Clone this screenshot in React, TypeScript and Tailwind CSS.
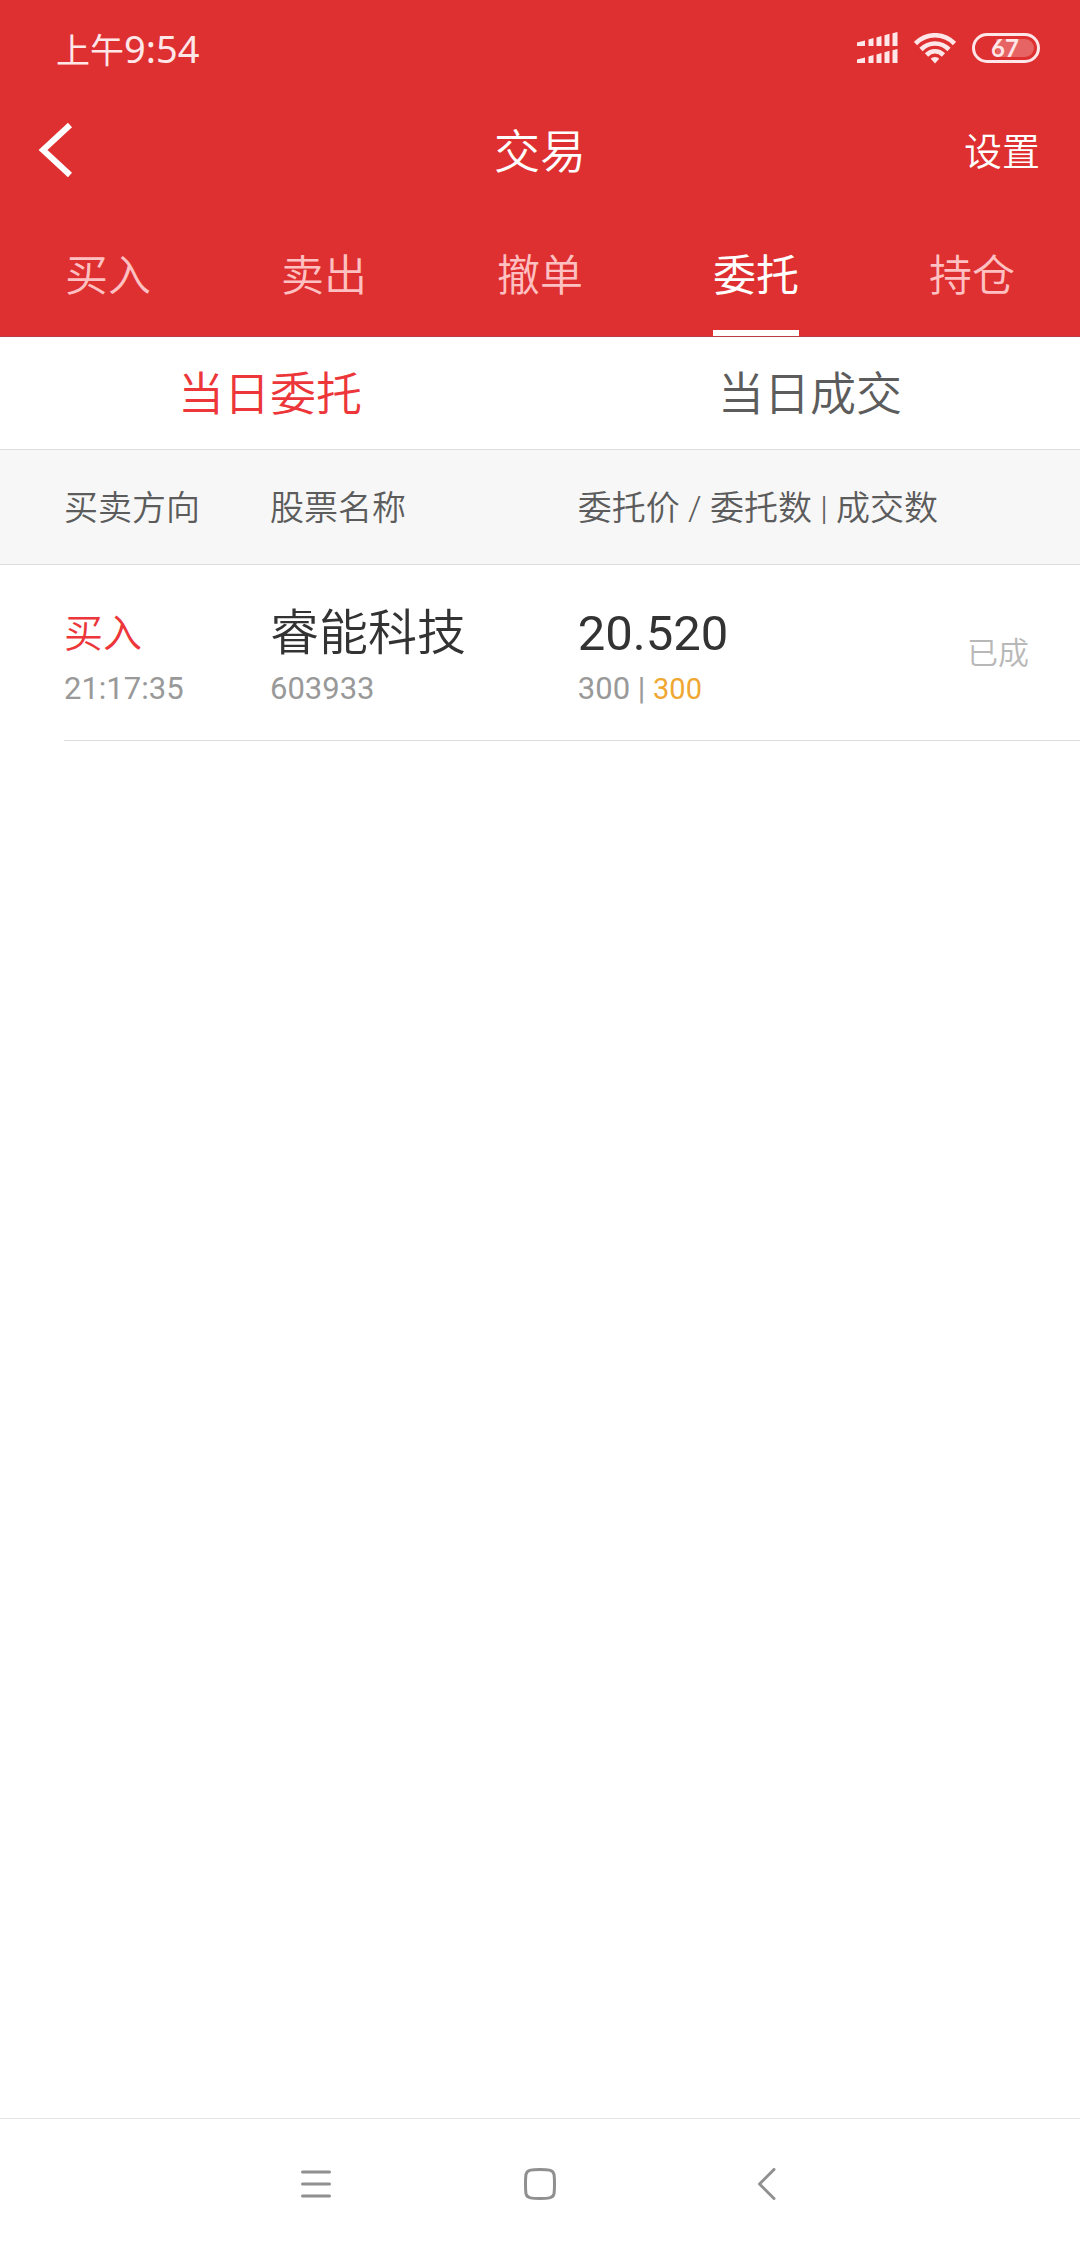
import React, { useState } from 'react';

interface Order {
  side: string;
  time: string;
  name: string;
  code: string;
  price: string;
  quantity: number;
  filled: number;
  status: string;
}

const TABS = ['买入', '卖出', '撤单', '委托', '持仓'];
const SUB_TABS = ['当日委托', '当日成交'];

const ORDERS: Order[] = [
  {
    side: '买入',
    time: '21:17:35',
    name: '睿能科技',
    code: '603933',
    price: '20.520',
    quantity: 300,
    filled: 300,
    status: '已成',
  },
];

const SignalIcon: React.FC = () => (
  <svg width="41" height="32" viewBox="0 0 41 32" fill="currentColor" aria-hidden="true">
    <path d="M0 10.5L8 8.5V14H0zM11.5 7.5l5-1.5v8h-5zM19.5 5.5l5-1.5v10h-5zM27.5 3.2l5-1.5V14h-5zM35.5 1.2l5-1.2v14h-5z" />
    <path d="M0 27.5l8-2V31H0zM11.5 24.5l5-1.5v8h-5zM19.5 22.5l5-1.5v10h-5zM27.5 20.2l5-1.5V31h-5zM35.5 18.2l5-1.2v14h-5z" />
  </svg>
);

const WifiIcon: React.FC = () => (
  <svg width="42" height="31" viewBox="0 0 42 31" fill="none" stroke="currentColor" strokeWidth="4.6" aria-hidden="true">
    <path d="M1.5 10.5C12.500 -0.500 29.500 -0.500 40.500 10.500" />
    <path d="M7 16.500C15 8.500 27 8.500 35 16.500" />
    <path d="M12.500 22C17.500 17 24.500 17 29.500 22" />
    <path d="M21 24c1.700 0 3.200.7 4.200 1.800L21 30.500l-4.200-4.700C17.800 24.700 19.300 24 21 24z" fill="currentColor" stroke="none" />
  </svg>
);

const Battery: React.FC<{ level: number }> = ({ level }) => (
  <div className="relative flex h-[30px] w-[68px] items-center justify-center rounded-full border-3 border-current">
    <div className="absolute inset-[3px] flex justify-end">
      <div className="rounded-r-full bg-white/25" style={{ width: `${level}%` }} />
    </div>
    <span className="relative pr-[2px] font-[Lato,sans-serif] text-[24px] leading-[24px] font-bold">{level}</span>
  </div>
);

const StatusBar: React.FC = () => (
  <div className="flex h-24 items-center justify-between pr-10 pl-14 text-[#ffe6e8]">
    <div className="flex items-baseline font-['Noto_Sans','Noto_Sans_CJK_SC',sans-serif] leading-none">
      <span className="text-[34px]">上午</span>
      <span className="text-[38px]">9:54</span>
    </div>
    <div className="flex items-center gap-4">
      <SignalIcon />
      <WifiIcon />
      <Battery level={67} />
    </div>
  </div>
);

const OrderTable: React.FC<{ orders: Order[] }> = ({ orders }) => (
  <table className="w-full table-fixed border-collapse text-left">
    <colgroup>
      <col className="w-[25%]" />
      <col className="w-[28.5%]" />
      <col />
      <col className="w-[20%]" />
    </colgroup>
    <thead>
      <tr className="h-[114px] border-b border-[#dddddd] bg-[#f7f7f7] text-[34px] text-[#5c5c5c]">
        <th className="pt-1 pl-16 font-[350] whitespace-nowrap">买卖方向</th>
        <th className="pt-1 font-[350] whitespace-nowrap">股票名称</th>
        <th colSpan={2} className="pt-1 font-[350] whitespace-nowrap">
          委托价 / 委托数 | 成交数
        </th>
      </tr>
    </thead>
    <tbody>
      {orders.map((order) => (
        <tr key={order.code + order.time} className="whitespace-nowrap">
          <td className="p-0 pl-16">
            <div className="h-44 border-b border-[#dddddd] pt-[37px]">
              <div className="text-[39px] leading-[64px] font-[350] text-[#ec3639]">{order.side}</div>
              <div className="text-[31px] leading-[46px] text-[#999999]">{order.time}</div>
            </div>
          </td>
          <td className="p-0">
            <div className="h-44 border-b border-[#dddddd] pt-[37px]">
              <div className="text-[49px] leading-[64px] font-[350] text-[#333333]">{order.name}</div>
              <div className="text-[31px] leading-[46px] text-[#999999]">{order.code}</div>
            </div>
          </td>
          <td className="p-0">
            <div className="h-44 border-b border-[#dddddd] pt-[37px]">
              <div className="text-[49px] leading-[64px] text-[#333333]">{order.price}</div>
              <div className="text-[31px] leading-[46px] text-[#999999]">
                {order.quantity} | <span className="text-[29px] text-[#f0a732]">{order.filled}</span>
              </div>
            </div>
          </td>
          <td className="p-0">
            <div className="flex h-44 items-center justify-end border-b border-[#dddddd] pt-1 pr-[51px] text-[31px] font-[350] text-[#b8b8b8]">
              {order.status}
            </div>
          </td>
        </tr>
      ))}
    </tbody>
  </table>
);

const SystemNav: React.FC = () => (
  <nav className="flex h-[130px] items-stretch justify-center border-t border-[#e4e4e4] text-[#909090]">
    <button type="button" aria-label="菜单" className="flex w-56 items-center justify-center">
      <svg width="30" height="28" viewBox="0 0 30 28" stroke="currentColor" strokeWidth="3" strokeLinecap="round">
        <path d="M1.500 2h27M1.500 14h27M1.500 26h27" />
      </svg>
    </button>
    <button type="button" aria-label="主屏幕" className="flex w-56 items-center justify-center">
      <svg width="32" height="32" viewBox="0 0 32 32" fill="none" stroke="currentColor" strokeWidth="3">
        <path d="M16 1.500c4 0 7 .1 9.500.6 3 .6 4.200 2 4.600 4.600.3 2.500.4 5.300.4 9.300s-.1 6.800-.4 9.300c-.4 2.600-1.600 4-4.600 4.600-2.500.5-5.500.6-9.500.6s-7-.1-9.500-.6c-3-.6-4.200-2-4.600-4.600-.3-2.500-.4-5.300-.4-9.300s.1-6.800.4-9.300c.4-2.600 1.600-4 4.600-4.600C9 1.600 12 1.500 16 1.500z" />
      </svg>
    </button>
    <button type="button" aria-label="返回" className="flex w-56 items-center justify-center">
      <svg width="24" height="32" viewBox="0 0 24 32" fill="none" stroke="currentColor" strokeWidth="3" strokeLinecap="round" strokeLinejoin="round">
        <path d="M22 1.500L7.500 16 22 30.500" />
      </svg>
    </button>
  </nav>
);

export default function App() {
  const [tab, setTab] = useState('委托');
  const [subTab, setSubTab] = useState('当日委托');

  return (
    <div className="flex min-h-screen flex-col bg-white font-[Roboto,'Noto_Sans_CJK_SC',sans-serif]">
      <header className="border-b border-[#b83c40] bg-[#de3031] text-white">
        <StatusBar />
        <div className="grid h-[108px] grid-cols-3 items-center px-9">
          <button type="button" aria-label="返回" className="justify-self-start">
            <svg width="40" height="56" viewBox="0 0 40 56" fill="none" stroke="currentColor" strokeWidth="6">
              <path d="M34 3L7 28l27 25" />
            </svg>
          </button>
          <h1 className="pt-1 text-center text-[46px] leading-none font-[350]">交易</h1>
          <button type="button" className="justify-self-end pt-1 pr-1 text-[38px] leading-none font-[350]">
            设置
          </button>
        </div>
        <nav className="grid grid-cols-5 pt-[42px]">
          {TABS.map((label) => (
            <button
              key={label}
              type="button"
              onClick={() => setTab(label)}
              className={`justify-self-center border-b-6 pb-6 text-[43px] leading-[60px] ${
                tab === label ? 'border-white text-white' : 'border-transparent font-[350] text-[#ffc0c2]'
              }`}
            >
              {label}
            </button>
          ))}
        </nav>
      </header>

      <div className="grid h-[113px] grid-cols-2 border-b border-[#dddddd]">
        {SUB_TABS.map((label) => (
          <button
            key={label}
            type="button"
            onClick={() => setSubTab(label)}
            className={`pt-px text-[46px] leading-none font-[350] ${subTab === label ? 'text-[#ec3639]' : 'text-[#5c5c5c]'}`}
          >
            {label}
          </button>
        ))}
      </div>

      <main className="flex-1">
        <OrderTable orders={ORDERS} />
      </main>

      <SystemNav />
    </div>
  );
}
